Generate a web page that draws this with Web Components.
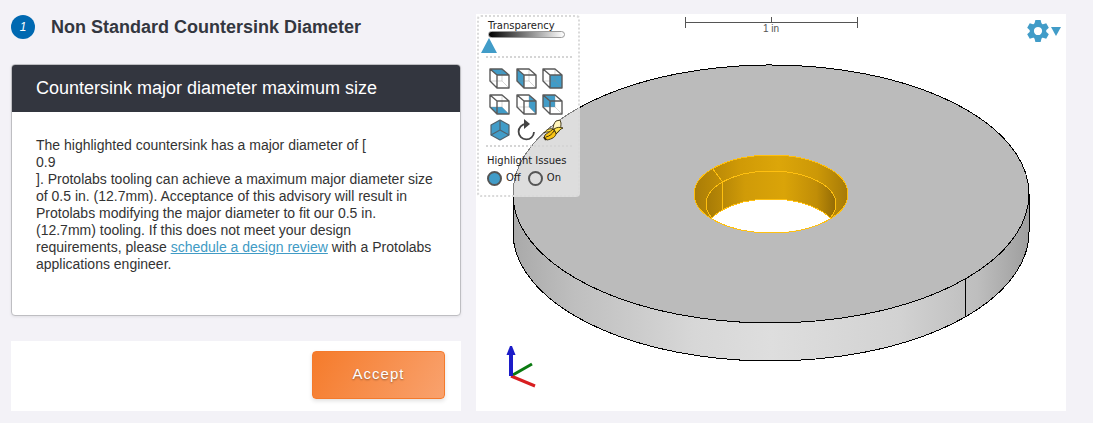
<!DOCTYPE html>
<html lang="en">
<head>
<meta charset="utf-8">
<meta name="viewport" content="width=device-width, initial-scale=1">
<title>Design advisory</title>
<style>
body { margin: 0; background: #f3f2f7; font-family: "Liberation Sans", Arial, sans-serif; color: #333; }
advisory-card a { color: #419bc5; text-decoration: underline; }
</style>
</head>
<body>
<review-page>
  <advisory-heading slot="advisory" number="1">Non Standard Countersink Diameter</advisory-heading>
  <advisory-card slot="advisory">
    <span slot="title">Countersink major diameter maximum size</span>
    The highlighted countersink has a major diameter of [<br>0.9<br>]. Protolabs tooling can achieve a maximum major diameter size of 0.5 in. (12.7mm). Acceptance of this advisory will result in Protolabs modifying the major diameter to fit our 0.5 in. (12.7mm) tooling. If this does not meet your design requirements, please <a href="#review">schedule a design review</a> with a Protolabs applications engineer.
  </advisory-card>
  <action-bar slot="advisory">Accept</action-bar>
  <part-viewer slot="viewer"></part-viewer>
</review-page>

<script>
function define(name, html, setup) {
  const template = document.createElement('template');
  template.innerHTML = html;
  customElements.define(name, class extends HTMLElement {
    constructor() {
      super();
      this.attachShadow({ mode: 'open' }).append(template.content.cloneNode(true));
    }
    connectedCallback() { if (setup) setup(this, this.shadowRoot); }
  });
}

define('review-page', `
<style>
:host { display: block; padding: 14px 27px 12px 11px; }
main { display: grid; grid-template-columns: minmax(0, 45fr) minmax(0, 59fr); gap: 15px; }
.advisory { display: flex; flex-direction: column; }
</style>
<main><div class="advisory"><slot name="advisory"></slot></div><slot name="viewer"></slot></main>`);

define('advisory-heading', `
<style>
:host { display: flex; align-items: center; gap: 16px; height: 26px; margin-bottom: 24px; }
.badge { display: grid; place-items: center; width: 24px; height: 24px; border-radius: 50%; background: #0069b1; color: #fff; font-size: 12px; font-style: italic; }
h1 { margin: 0; font-size: 18px; line-height: 26px; font-weight: bold; color: #333740; }
</style>
<span class="badge"></span><h1><slot></slot></h1>`,
(host, root) => { root.querySelector('.badge').textContent = host.getAttribute('number'); });

define('advisory-card', `
<style>
:host { display: block; border: 1px solid #bebec2; border-radius: 4px; background: #fff; overflow: hidden; margin-bottom: 25px; box-shadow: 0 1px 3px rgba(0,0,0,.08); }
h2 { margin: 0; padding: 0 24px; background: #33363f; color: #fff; font-size: 18px; line-height: 47px; font-weight: normal; }
.body { min-height: 143px; padding: 25px 24px 35px; font-size: 14px; line-height: 17px; color: #333; }
</style>
<h2><slot name="title"></slot></h2><div class="body"><slot></slot></div>`);

define('action-bar', `
<style>
:host { display: flex; justify-content: flex-end; padding: 10px 16px 12px; background: #fff; }
button { width: 133px; height: 48px; padding: 0 0 4px; border: 1px solid #f47a2c; border-radius: 4px; background: linear-gradient(120deg, #f57b2b, #f9a26e); color: #fff; font: 15px "Liberation Sans", Arial, sans-serif; letter-spacing: 1px; text-shadow: 0 1px 2px rgba(0,0,0,.4); box-shadow: 0 2px 4px rgba(0,0,0,.12); }
</style>
<button type="button"><slot></slot></button>`);

const faces = {
  top: '1,1 13,1 20,7 8,7',
  left: '1,1 8,7 8,20 1,13',
  front: '8,7 20,7 20,20 8,20',
  bottom: '1,13 13,13 20,20 8,20',
  right: '13,1 20,7 20,20 13,13',
  back: '1,1 13,1 13,13 1,13'
};
define('view-cube', `
<style>
:host { display: block; }
button { display: block; padding: 0; border: 0; background: none; }
svg { display: block; }
</style>
<button type="button"><svg width="21" height="21" viewBox="0 0 21 21" fill="none" stroke-linejoin="round">
<polygon fill="#419cc8"/>
<path d="M1 13H13V1M13 13L20 20" stroke="#888" stroke-opacity=".4" stroke-width=".9"/>
<path d="M1 1H13L20 7V20H8L1 13ZM1 1L8 7H20M8 7V20" stroke="#5a5a5a" stroke-width="1.4"/>
</svg></button>`,
(host, root) => {
  const face = host.getAttribute('face');
  root.querySelector('polygon').setAttribute('points', faces[face]);
  root.querySelector('button').setAttribute('aria-label', face + ' view');
});

define('view-toolbar', `
<style>
:host { display: block; box-sizing: border-box; width: 103px; border: 2px dotted #dadada; border-radius: 4px; padding: 2px 9px 9px; background: rgba(255,255,255,.5); font: 10px/14px "DejaVu Sans", Verdana, sans-serif; color: #222; }
.name { display: block; height: 12px; line-height: 14px; }
.bar { box-sizing: border-box; width: 77px; height: 7px; border: 1px solid #999; border-radius: 4px; background: linear-gradient(90deg, #000, #fff); }
input[type=range] { display: block; appearance: none; width: 92px; height: 15px; margin: 0 -7px 3px; background: none; }
input[type=range]::-webkit-slider-thumb { appearance: none; width: 16px; height: 15px; background: #419cc8; clip-path: polygon(50% 0, 100% 100%, 0 100%); }
.rule { border-top: 2px dotted #d5d5d5; margin-right: -3px; margin-left: -2px; }
.grid { display: grid; grid-template-columns: 27px 26px 24px; grid-auto-rows: 26px; padding: 7px 0 2px 1px; align-items: center; }
.grid button { display: block; padding: 0; border: 0; background: none; }
.grid svg { display: block; }
.issues { margin: 0; padding: 7px 0 0; border: 0; min-width: 0; }
legend { float: left; padding: 0; margin-left: -1px; white-space: nowrap; }
.choices { clear: both; display: flex; gap: 7px; margin-left: -1px; padding-top: 2px; }
.choices label { display: flex; align-items: center; gap: 4px; height: 16px; line-height: 18px; }
input[type=radio] { appearance: none; box-sizing: border-box; width: 15px; height: 15px; margin: 0; border: 2px solid #555; border-radius: 50%; }
input[type=radio]:checked { background: #419cc8; }
</style>
<label class="name" for="t">Transparency</label>
<div class="bar"></div>
<input id="t" type="range" min="0" max="100" value="0">
<div class="rule"></div>
<div class="grid">
<view-cube face="top"></view-cube><view-cube face="left"></view-cube><view-cube face="front"></view-cube>
<view-cube face="bottom"></view-cube><view-cube face="right"></view-cube><view-cube face="back"></view-cube>
<button type="button" aria-label="Isometric view"><svg width="22" height="22" viewBox="0 0 22 22" stroke="#50606a" stroke-width="1.2" stroke-linejoin="round"><path d="M11 1L20 6V16L11 21L2 16V6Z" fill="#419cc8"/><path d="M11 1V11M2 16L11 11L20 16" fill="none"/></svg></button>
<button type="button" aria-label="Rotate"><svg width="22" height="22" viewBox="0 0 22 22"><path d="M10 5A7.7 7.7 0 1 0 18 13" fill="none" stroke="#444" stroke-width="1.8"/><path d="M8 0L14 5L8 10Z" fill="#444"/></svg></button>
<button type="button" aria-label="Banana for scale"><svg width="22" height="22" viewBox="0 0 22 22" stroke="#33290a" stroke-width=".9" stroke-linejoin="round"><path d="M11 11C11 7 12 4 14 2L18 1L19 4C19 9 18 12 14 15Z" fill="#fff5bd"/><path d="M11 10C7 9 4 11 2 14C6 12 8 13 9 14Z" fill="#ffe34a"/><path d="M12 10C15 8 18 8 21 9C18 10 17 12 14 15Z" fill="#ffe34a"/><path d="M11 10C8 13 5 14 3 16L2 19L5 21C10 20 14 18 14 14Z" fill="#f8c414"/><path d="M4 18C8 17 10 15 12 12" fill="none"/><path d="M2 18L4 21" stroke-width="2"/></svg></button>
</div>
<div class="rule"></div>
<fieldset class="issues"><legend>Highlight Issues</legend>
<div class="choices"><label><input type="radio" name="h" checked>Off</label><label><input type="radio" name="h">On</label></div></fieldset>`);

define('scale-bar', `
<style>
:host { display: block; width: 173px; color: #555; font: 10px/11px "Liberation Sans", Arial, sans-serif; text-align: center; }
svg { display: block; overflow: visible; }
span { display: block; }
</style>
<svg width="173" height="6" fill="none" stroke="#555" shape-rendering="crispEdges"><path d="M.5 0V11M172.5 0V11M86.5 0V5M0 5.5H173"/></svg><span>1 in</span>`);

define('settings-button', `
<style>
:host { display: block; }
button { display: flex; align-items: center; gap: 2px; padding: 0; border: 0; background: none; }
svg { display: block; }
</style>
<button type="button" aria-label="Viewer settings">
<svg width="22" height="22" viewBox="-11 -11 22 22" fill="#419cc8"><g id="teeth"></g><circle r="6.2" fill="none" stroke="#419cc8" stroke-width="4.2"/></svg>
<svg width="10" height="10" viewBox="0 0 10 10"><path d="M0 1H10L5 10Z" fill="#419cc8"/></svg></button>`,
(host, root) => {
  root.querySelector('#teeth').innerHTML = [0, 60, 120, 180, 240, 300]
    .map(a => '<path transform="rotate(' + a + ')" d="M-3.6 -7L-2.6 -11H2.6L3.6 -7Z"/>').join('');
});

define('part-scene', `
<style>
:host { display: block; }
svg { display: block; width: 100%; height: 100%; }
</style>
<svg viewBox="0 0 590 397" role="img" aria-label="Disc with highlighted countersink">
<defs>
<linearGradient id="side"><stop offset="0" stop-color="#a9a9a9"/><stop offset=".12" stop-color="#bfbfbf"/><stop offset=".35" stop-color="#d7d7d7"/><stop offset=".5" stop-color="#dedede"/><stop offset=".75" stop-color="#d2d2d2"/><stop offset=".9" stop-color="#bebebe"/><stop offset="1" stop-color="#9e9e9e"/></linearGradient>
<linearGradient id="cone"><stop offset="0" stop-color="#a97c07"/><stop offset=".3" stop-color="#d09a06"/><stop offset=".55" stop-color="#dca609"/><stop offset=".8" stop-color="#cc9807"/><stop offset="1" stop-color="#a67a07"/></linearGradient>
<linearGradient id="bore"><stop offset="0" stop-color="#a67a06"/><stop offset=".3" stop-color="#d09b08"/><stop offset=".6" stop-color="#daa408"/><stop offset=".85" stop-color="#c08d07"/><stop offset="1" stop-color="#936b05"/></linearGradient>
<clipPath id="mouth"><ellipse cx="295" cy="180" rx="77" ry="39"/></clipPath>
</defs>
<g shape-rendering="crispEdges">
<path d="M37 180V218A258 129 0 0 0 553 218V180Z" fill="url(#side)" stroke="#000"/>
<ellipse cx="295" cy="180" rx="258" ry="129" fill="#bbb" stroke="#000"/>
<path d="M489.5 264V302" stroke="#000"/>
<g clip-path="url(#mouth)" stroke="#ffc010">
<rect x="218" y="141" width="154" height="78" fill="url(#cone)" stroke="none"/>
<ellipse cx="295" cy="190" rx="65" ry="33" fill="url(#bore)"/>
<ellipse cx="295" cy="218" rx="65" ry="33" fill="#fff"/>
<path d="M237 155L246.500 168V197" fill="none"/>
</g>
<ellipse cx="295" cy="180" rx="77" ry="39" fill="none" stroke="#ffc010"/>
</g>
</svg>`);

define('axis-triad', `
<style>:host { display: block; } svg { display: block; }</style>
<svg width="32" height="44" viewBox="0 0 32 44" fill="none">
<path d="M6 31L27 19" stroke="#0a7a10" stroke-width="3"/>
<path d="M6 31L30 41" stroke="#d81e20" stroke-width="3"/>
<path d="M6 31V9" stroke="#1c1cc8" stroke-width="4"/><path d="M1.500 10L5 1H7L10.500 10Z" fill="#1c1cc8"/>
</svg>`);

define('part-viewer', `
<style>
:host { display: block; position: relative; background: #fff; min-height: 240px; }
part-scene { position: absolute; inset: 0; }
view-toolbar { position: absolute; left: 1px; top: 1px; }
scale-bar { position: absolute; left: 0; right: 0; margin: 3px auto 0; }
settings-button { position: absolute; right: 5px; top: 6px; }
axis-triad { position: absolute; left: 29px; bottom: 22px; }
</style>
<part-scene></part-scene><scale-bar></scale-bar><view-toolbar></view-toolbar><settings-button></settings-button><axis-triad></axis-triad>`);
</script>
</body>
</html>
